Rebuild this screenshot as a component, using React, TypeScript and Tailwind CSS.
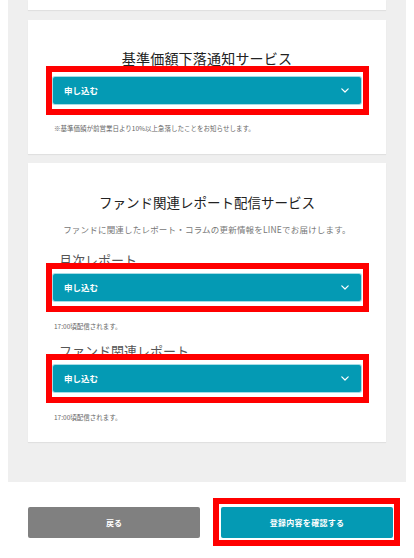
const font = { fontFamily: '"Noto Sans CJK JP", "Noto Sans", sans-serif' };

function Highlight({ className }: { className: string }) {
  return <span className={`pointer-events-none absolute border-[6px] border-[#ff0000] ${className}`} />;
}

function ApplySelect() {
  return (
    <div className="relative">
      <div className="flex h-[27px] items-center justify-between rounded-[2px] bg-[#049ab4] pl-[11px] pr-[12px] shadow-[0_0_0_1px_rgba(4,154,180,0.35)]">
        <span className="text-[8.5px] font-bold text-white">申し込む</span>
        <svg width="8" height="5" viewBox="0 0 8 5" fill="none">
          <path d="M0.8 0.8 L4 4 L7.2 0.8" stroke="white" strokeWidth="1.2" strokeLinecap="round" strokeLinejoin="round" />
        </svg>
      </div>
      <Highlight className="-top-[11px] -bottom-[11px] -left-[7px] -right-[8px]" />
    </div>
  );
}

function Note({ children }: { children: string }) {
  return <p className="pl-[1px] text-[6.5px] leading-[10px] text-[#666]">{children}</p>;
}

export default function App() {
  return (
    <div className="min-h-[558px] bg-white" style={font}>
      <div className="mx-2 bg-[#efefef] px-5 pb-[40px]">
        {/* previous card, scrolled off */}
        <div className="h-[10px] bg-white shadow-[0_1px_1px_rgba(0,0,0,0.06)]" />

        {/* 基準価額 */}
        <div className="mt-[10px] bg-white px-[25px] pt-[28px] pb-[21px] shadow-[0_1px_1px_rgba(0,0,0,0.06)]">
          <h2 className="text-center text-[14px] font-normal leading-[20px] tracking-[0.2px] text-[#222]">
            基準価額下落通知サービス
          </h2>
          <div className="mt-[9px]">
            <ApplySelect />
          </div>
          <div className="mt-[19px]">
            <Note>※基準価額が前営業日より10%以上急落したことをお知らせします。</Note>
          </div>
        </div>

        {/* ファンド関連レポート */}
        <div className="mt-[9px] bg-white px-[25px] pt-[29px] pb-[20px] shadow-[0_1px_1px_rgba(0,0,0,0.06)]">
          <h2 className="text-center text-[13.5px] font-normal leading-[20px] text-[#222]">
            ファンド関連レポート配信サービス
          </h2>
          <p className="mt-[11px] text-center text-[8.5px] leading-[12px] tracking-[0.2px] text-[#777]">
            ファンドに関連したレポート・コラムの更新情報をLINEでお届けします。
          </p>

          <div className="mt-[16px] pl-[6px] text-[13px] leading-[18px] text-[#555]">月次レポート</div>
          <div className="mt-[5px]">
            <ApplySelect />
          </div>
          <div className="mt-[20px]">
            <Note>17:00頃配信されます。</Note>
          </div>

          <div className="mt-[11px] pl-[6px] text-[13px] leading-[18px] text-[#555]">ファンド関連レポート</div>
          <div className="mt-[5px]">
            <ApplySelect />
          </div>
          <div className="mt-[20px]">
            <Note>17:00頃配信されます。</Note>
          </div>
        </div>
      </div>

      <div className="mt-[25px] flex justify-between px-[21px] pl-[28px]">
        <button className="flex h-[31px] w-[172px] items-center justify-center rounded-[2px] bg-[#808080] text-[8px] font-bold text-white">
          戻る
        </button>
        <div className="relative">
          <button className="flex h-[31px] w-[172px] items-center justify-center rounded-[2px] bg-[#049ab4] text-[8px] font-bold tracking-[0.3px] text-white">
            登録内容を確認する
          </button>
          <Highlight className="-top-[9px] -bottom-[8px] -left-[8px] -right-[7px]" />
        </div>
      </div>
    </div>
  );
}
